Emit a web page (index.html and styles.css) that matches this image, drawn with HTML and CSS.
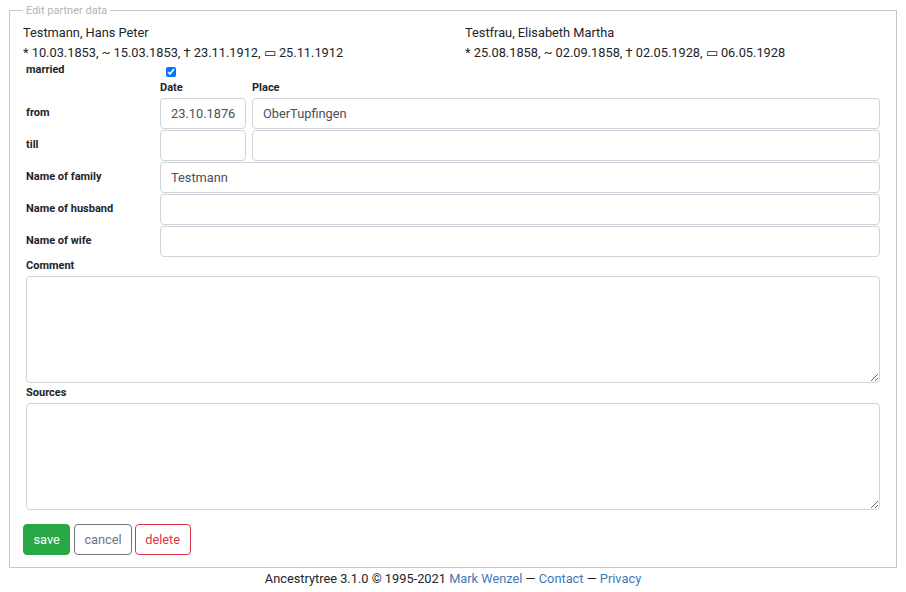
FILE: index.html
```html
<!DOCTYPE html>
<html lang="en">
<head>
<meta charset="utf-8">
<title>Edit partner data</title>
<link rel="stylesheet" href="styles.css">
</head>
<body>
<form class="page">
  <fieldset class="box">
    <legend class="box-title">Edit partner data</legend>
    <div class="persons">
      <div class="person">
        <div>Testmann, Hans Peter</div>
        <div>* 10.03.1853, ~ 15.03.1853, † 23.11.1912, ▭ 25.11.1912</div>
      </div>
      <div class="person">
        <div>Testfrau, Elisabeth Martha</div>
        <div>* 25.08.1858, ~ 02.09.1858, † 02.05.1928, ▭ 06.05.1928</div>
      </div>
    </div>
    <div class="grid">
      <label class="lbl lbl-married">married</label>
      <div class="check-cell"><input type="checkbox" class="check" checked></div>
      <div></div>

      <div></div>
      <div class="col-head">Date</div>
      <div class="col-head">Place</div>

      <label class="lbl">from</label>
      <input class="field" type="text" value="23.10.1876">
      <input class="field" type="text" value="OberTupfingen">

      <label class="lbl">till</label>
      <input class="field" type="text" value="">
      <input class="field" type="text" value="">

      <label class="lbl">Name of family</label>
      <input class="field span2" type="text" value="Testmann">

      <label class="lbl">Name of husband</label>
      <input class="field span2" type="text" value="">

      <label class="lbl">Name of wife</label>
      <input class="field span2" type="text" value="">
    </div>
    <div class="block">
      <label class="block-lbl">Comment</label>
      <textarea class="area"></textarea>
      <label class="block-lbl">Sources</label>
      <textarea class="area"></textarea>
    </div>
    <div class="actions">
      <button type="button" class="btn btn-save">save</button>
      <button type="button" class="btn btn-cancel">cancel</button>
      <button type="button" class="btn btn-delete">delete</button>
    </div>
  </fieldset>
  <footer class="foot">Ancestrytree 3.1.0 © 1995-2021 <a href="#">Mark Wenzel</a> — <a href="#">Contact</a> — <a href="#">Privacy</a></footer>
</form>
</body>
</html>
```

FILE: styles.css
```css
html, body {
  margin: 0;
  padding: 0;
  background: #fff;
}
body {
  font-family: Roboto, "Liberation Sans", Arial, sans-serif;
  font-size: 12.8px;
  line-height: 19.5px;
  color: #212529;
}
.page {
  padding-top: 4px;
}
.box {
  margin: 0 9px;
  border: 1px solid #c8c8c8;
  padding: 6px 16px 12px 13px;
  min-width: 0;
}
.box-title {
  font-size: 11px;
  line-height: 13px;
  color: #b4b4b4;
  padding: 0 3px;
}
.persons {
  display: grid;
  grid-template-columns: 442px 1fr;
}
.grid {
  display: grid;
  grid-template-columns: 131px 86px 1fr;
  column-gap: 6px;
  row-gap: 1px;
}
.lbl {
  font-size: 11px;
  font-weight: bold;
  line-height: 16px;
  padding: 7px 0 0 3px;
}
.lbl-married {
  padding-top: 0;
  line-height: 16px;
}
.check-cell {
  height: 16px;
}
.check {
  width: 10px;
  height: 10px;
  margin: 5px 0 0 6px;
  display: block;
}
.col-head {
  font-size: 11px;
  font-weight: bold;
  line-height: 18px;
}
.field {
  height: 31px;
  box-sizing: border-box;
  border: 1px solid #ced4da;
  border-radius: 4px;
  padding: 0 6px 0 10px;
  font-family: inherit;
  font-size: 12.8px;
  color: #495057;
  min-width: 0;
  width: 100%;
  margin: 0;
}
.span2 {
  grid-column: 2 / 4;
}
.block {
  display: flex;
  flex-direction: column;
  padding-left: 3px;
}
.block-lbl {
  font-size: 11px;
  font-weight: bold;
  line-height: 16px;
  margin: 1px 0 2px;
}
.area {
  height: 107px;
  box-sizing: border-box;
  border: 1px solid #ced4da;
  border-radius: 4px;
  margin: 0 0 1px;
  font-family: inherit;
  font-size: 12.8px;
  color: #495057;
}
.actions {
  display: flex;
  gap: 3px;
  margin-top: 13px;
}
.btn {
  height: 31px;
  box-sizing: border-box;
  padding: 0 9.5px;
  border-radius: 4px;
  font-family: inherit;
  font-size: 12.8px;
  background: #fff;
  border: 1px solid;
  margin: 0;
}
.btn-save {
  background: #28a745;
  border-color: #28a745;
  color: #fff;
  margin-right: 1px;
}
.btn-cancel {
  border-color: #6c757d;
  color: #6c757d;
  padding: 0 9px;
}
.btn-delete {
  border-color: #dc3545;
  color: #dc3545;
}
.foot {
  text-align: center;
  padding-top: 1px;
}
.foot a {
  color: #3d7ab8;
  text-decoration: none;
}
```
